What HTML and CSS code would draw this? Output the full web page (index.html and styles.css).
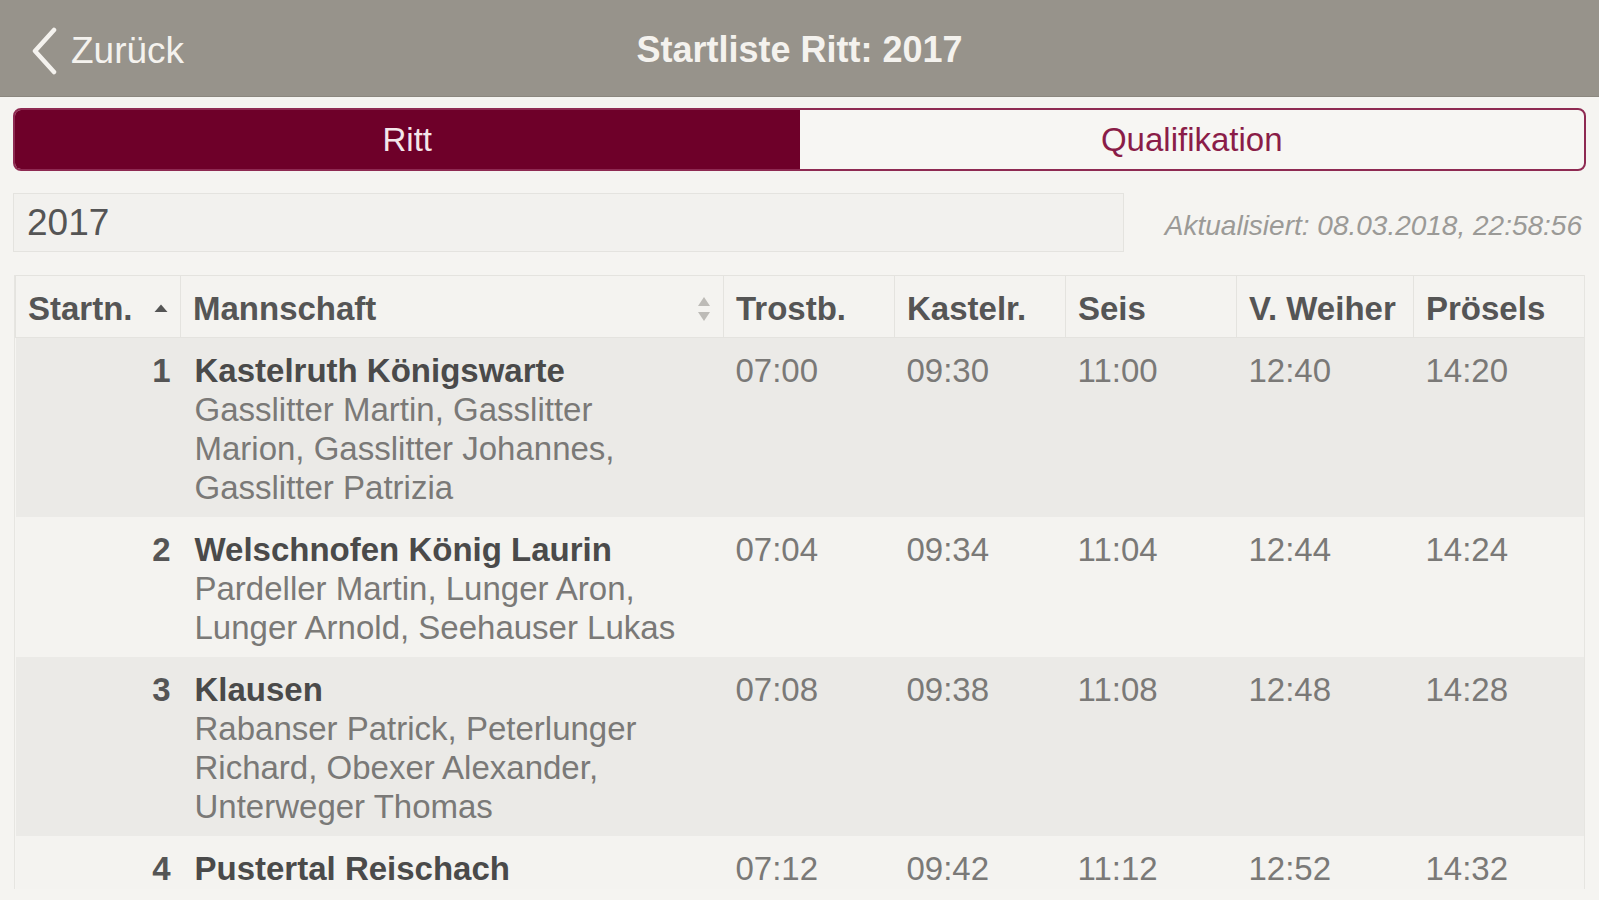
FILE: index.html
```html
<!DOCTYPE html>
<html lang="de">
<head>
<meta charset="utf-8">
<title>Startliste Ritt: 2017</title>
<link rel="stylesheet" href="styles.css">
</head>
<body>
<header class="navbar">
  <a class="back" href="#">
    <svg class="chevron" width="28" height="48" viewBox="0 0 28 48"><path d="M24 3 L5 24 L24 45" fill="none" stroke="#f4f2ee" stroke-width="4.5" stroke-linecap="round" stroke-linejoin="round"/></svg>
    <span>Zurück</span>
  </a>
  <h1 class="title">Startliste Ritt: 2017</h1>
</header>
<main class="content">
  <div class="segmented">
    <button class="seg seg-active">Ritt</button>
    <button class="seg">Qualifikation</button>
  </div>
  <div class="toolbar">
    <div class="search">2017</div>
    <div class="updated">Aktualisiert: 08.03.2018, 22:58:56</div>
  </div>
  <div class="table-wrap">
    <table class="startlist">
      <colgroup>
        <col class="c-nr"><col class="c-team"><col class="c-t"><col class="c-t"><col class="c-t"><col class="c-tw"><col class="c-t">
      </colgroup>
      <thead>
        <tr>
          <th><div class="th-in"><span>Startn.</span>
            <svg class="sort" width="14" height="9" viewBox="0 0 14 9"><path d="M7 0.5 L13.5 8 L0.5 8 Z" fill="#555"/></svg></div></th>
          <th><div class="th-in"><span>Mannschaft</span>
            <svg class="sort" width="14" height="26" viewBox="0 0 14 26"><path d="M7 1 L13 10 L1 10 Z" fill="#bdbbb7"/><path d="M7 25 L13 16 L1 16 Z" fill="#bdbbb7"/></svg></div></th>
          <th>Trostb.</th>
          <th>Kastelr.</th>
          <th>Seis</th>
          <th>V. Weiher</th>
          <th>Prösels</th>
        </tr>
      </thead>
      <tbody>
        <tr class="odd">
          <td class="nr">1</td>
          <td class="team"><div class="team-name">Kastelruth Königswarte</div><div class="members">Gasslitter Martin, Gasslitter<br>Marion, Gasslitter Johannes,<br>Gasslitter Patrizia</div></td>
          <td>07:00</td><td>09:30</td><td>11:00</td><td>12:40</td><td>14:20</td>
        </tr>
        <tr>
          <td class="nr">2</td>
          <td class="team"><div class="team-name">Welschnofen König Laurin</div><div class="members">Pardeller Martin, Lunger Aron,<br>Lunger Arnold, Seehauser Lukas</div></td>
          <td>07:04</td><td>09:34</td><td>11:04</td><td>12:44</td><td>14:24</td>
        </tr>
        <tr class="odd">
          <td class="nr">3</td>
          <td class="team"><div class="team-name">Klausen</div><div class="members">Rabanser Patrick, Peterlunger<br>Richard, Obexer Alexander,<br>Unterweger Thomas</div></td>
          <td>07:08</td><td>09:38</td><td>11:08</td><td>12:48</td><td>14:28</td>
        </tr>
        <tr>
          <td class="nr">4</td>
          <td class="team"><div class="team-name">Pustertal Reischach</div></td>
          <td>07:12</td><td>09:42</td><td>11:12</td><td>12:52</td><td>14:32</td>
        </tr>
      </tbody>
    </table>
  </div>
</main>
</body>
</html>
```

FILE: styles.css
```css
* { box-sizing: border-box; }

html, body {
  margin: 0;
  padding: 0;
  background: #f5f4f1;
  font-family: "Liberation Sans", Arial, sans-serif;
  color: #555;
  overflow: hidden;
  height: 900px;
}

.navbar {
  height: 97px;
  background: #97938b;
  border-bottom: 1px solid #8b877f;
  display: flex;
  align-items: center;
  justify-content: center;
  position: relative;
}

.back {
  position: absolute;
  left: 30px;
  top: 27px;
  display: flex;
  align-items: center;
  gap: 13px;
  color: #f4f2ee;
  text-decoration: none;
  font-size: 37px;
  line-height: 48px;
}

.chevron { display: block; }

.title {
  margin: 0;
  font-size: 36px;
  font-weight: 700;
  color: #f4f2ee;
  line-height: 40px;
  padding-top: 4px;
}

.content {
  padding: 11px 13px 0;
}

.segmented {
  display: flex;
  height: 63px;
  border: 2px solid #8e2a52;
  border-radius: 8px;
  overflow: hidden;
  background: #f7f6f3;
}

.seg {
  flex: 1;
  border: 0;
  background: transparent;
  font-family: inherit;
  font-size: 33px;
  color: #8a1d48;
  padding: 0;
}

.seg-active {
  background: #6e0029;
  color: #f4e6ea;
}

.toolbar {
  display: flex;
  align-items: center;
  justify-content: space-between;
  margin-top: 22px;
  height: 59px;
}

.search {
  width: 1111px;
  height: 59px;
  background: #f2f1ee;
  border: 1px solid #e4e3df;
  font-size: 37px;
  line-height: 57px;
  color: #555;
  padding-left: 13px;
}

.updated {
  font-style: italic;
  font-size: 28px;
  color: #9b9a97;
  padding-right: 4px;
  padding-top: 6px;
}

.table-wrap {
  margin: 23px 1px 0;
  height: 614px;
  overflow: hidden;
  border-left: 1px solid #e6e5e1;
  border-right: 1px solid #e6e5e1;
}

.startlist {
  width: 100%;
  table-layout: fixed;
  border-collapse: collapse;
  font-size: 33px;
  line-height: 39px;
}

.c-nr { width: 165px; }
.c-team { width: 543px; }
.c-t { width: 171px; }
.c-tw { width: 177px; }

.startlist th {
  height: 62px;
  text-align: left;
  font-weight: 700;
  color: #555;
  padding: 4px 12px 0;
  border: 1px solid #e4e3df;
  background: #f4f3f0;
  white-space: nowrap;
}

.th-in {
  display: flex;
  align-items: center;
  justify-content: space-between;
}

.sort { display: block; flex: none; }

.startlist td {
  vertical-align: top;
  padding: 13px 12px 10px;
  color: #7a7977;
  white-space: nowrap;
  background: #f4f3f0;
}

.startlist tr.odd td { background: #ebeae7; }

.startlist td.nr {
  text-align: right;
  font-weight: 700;
  color: #555;
  padding-right: 10px;
}

.startlist td.team { padding-left: 14px; }

.team-name {
  font-weight: 700;
  color: #4a4a4a;
}

.members { color: #7a7977; }
```
